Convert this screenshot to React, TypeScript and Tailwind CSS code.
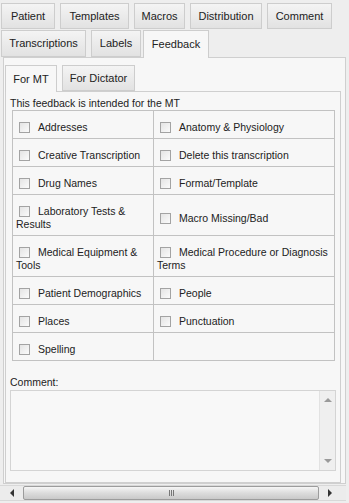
import React from 'react'

const mainRow1 = [
    { label: 'Patient', w: 'w-[54px]' },
    { label: 'Templates', w: 'w-[69px]' },
    { label: 'Macros', w: 'w-[51px]' },
    { label: 'Distribution', w: 'w-[72px]' },
    { label: 'Comment', w: 'w-[65px]' },
]

const rows: [string, string][] = [
    ['Addresses', 'Anatomy & Physiology'],
    ['Creative Transcription', 'Delete this transcription'],
    ['Drug Names', 'Format/Template'],
    ['Laboratory Tests & Results', 'Macro Missing/Bad'],
    ['Medical Equipment & Tools', 'Medical Procedure or Diagnosis Terms'],
    ['Patient Demographics', 'People'],
    ['Places', 'Punctuation'],
    ['Spelling', ''],
]

const tabCls = "flex items-center justify-center border border-[#cdcdcd] bg-gradient-to-b from-[#f4f4f4] to-[#e2e2e2] text-[11px] text-[#222]"

function Box() {
    return (
        <span className="inline-block align-[-2px] w-[11px] h-[11px] ml-[3px] mr-[8px] border border-[#a3a3a3] bg-gradient-to-br from-[#e4e4e4] to-[#fbfbfb]"></span>
    )
}

function Cell({ text, wide }: { text: string, wide?: boolean }) {
    return (
        <td className={"border border-[#c2c2c2] align-middle pl-[3px] pr-[1px] pt-[10px] pb-[4px] leading-[13px] " + (wide ? "w-[181px]" : "w-[141px]")}>
            {text !== '' && (
                <>
                    <Box />{text}
                </>
            )}
        </td>
    )
}

export default function App() {
    return (
        <div className="w-[349px] h-[503px] overflow-hidden bg-[#eeeeee] text-[#222] [font-family:'Liberation_Sans',Arial,sans-serif]">
            {/* main tabs */}
            <div className="flex gap-[5px] pl-[1px] pt-[3px]">
                {mainRow1.map((t) =>
                    <div key={t.label} className={tabCls + " h-[26px] " + t.w}>{t.label}</div>
                )}
            </div>
            <div className="flex pl-[1px] pt-[1px] relative z-10">
                <div className={tabCls + " h-[27px] w-[85px]"}>Transcriptions</div>
                <div className={tabCls + " h-[27px] w-[50px] ml-[5px]"}>Labels</div>
                <div className="flex items-center justify-center h-[28px] -mb-px w-[66px] ml-[2px] border border-b-0 border-[#cdcdcd] bg-[#f7f7f7] text-[11px]">Feedback</div>
            </div>

            {/* tab content */}
            <div className="ml-[3px] w-[343px] h-[427px] border border-[#cfcfcf] bg-[#f7f7f7] pl-[1px] pt-[7px]">
                <div className="flex relative z-10">
                    <div className="flex items-center justify-center h-[27px] -mb-px w-[52px] border border-b-0 border-[#cdcdcd] bg-[#f7f7f7] text-[11px]">For MT</div>
                    <div className={tabCls + " h-[26px] w-[73px] ml-[5px]"}>For Dictator</div>
                </div>
                <div className="w-[336px] h-[392px] border border-[#cfcfcf] pl-[4px] pt-[5px] text-[10.5px]">
                    <div className="leading-[13px] h-[13px]">This feedback is intended for the MT</div>
                    <table className="ml-[2px] w-[322px] border-collapse table-fixed">
                        <tbody>
                            {rows.map((r, i) =>
                                <tr key={i}>
                                    <Cell text={r[0]} />
                                    <Cell text={r[1]} wide />
                                </tr>
                            )}
                        </tbody>
                    </table>
                    <div className="mt-[15px] leading-[13px]">Comment:</div>
                    <div className="mt-[1px] w-[326px] h-[81px] border border-[#d4d4d4] bg-[#f8f8f8] flex justify-end">
                        <div className="w-[16px] h-full bg-[#efefef] border-l border-[#e2e2e2] flex flex-col items-center justify-between py-[7px]">
                            <span className="w-0 h-0 border-l-[4px] border-r-[4px] border-b-[4px] border-l-transparent border-r-transparent border-b-[#9a9a9a]"></span>
                            <span className="w-0 h-0 border-l-[4px] border-r-[4px] border-t-[4px] border-l-transparent border-r-transparent border-t-[#9a9a9a]"></span>
                        </div>
                    </div>
                </div>
            </div>

            {/* horizontal scrollbar */}
            <div className="mt-[1px] flex h-[16px] w-[346px] bg-[#ececec] border-y border-[#d8d8d8]">
                <div className="w-[23px] flex items-center justify-center">
                    <span className="w-0 h-0 border-t-[4px] border-b-[4px] border-r-[4px] border-t-transparent border-b-transparent border-r-[#333]"></span>
                </div>
                <div className="w-[296px] border border-[#9c9c9c] rounded-[2px] bg-gradient-to-b from-[#f6f6f6] via-[#dcdcdc] to-[#c9c9c9] flex items-center justify-center gap-[1px]">
                    <span className="w-px h-[6px] bg-[#777]"></span>
                    <span className="w-px h-[6px] bg-[#777]"></span>
                    <span className="w-px h-[6px] bg-[#777]"></span>
                </div>
                <div className="w-[22px] flex items-center justify-center">
                    <span className="w-0 h-0 border-t-[4px] border-b-[4px] border-l-[4px] border-t-transparent border-b-transparent border-l-[#333]"></span>
                </div>
            </div>
        </div>
    )
}
